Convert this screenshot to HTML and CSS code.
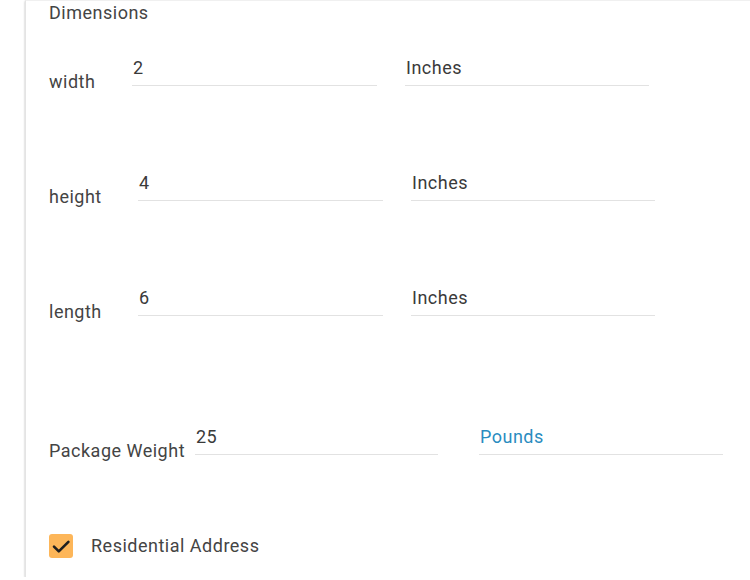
FILE: index.html
```html
<!DOCTYPE html>
<html>
<head>
<meta charset="utf-8">
<link rel="stylesheet" href="styles.css">
</head>
<body>
<div class="card">
  <div class="title">Dimensions</div>
  <div class="row row-first">
    <div class="label label-w">width</div>
    <div class="field">2</div>
    <div class="field field-unit">Inches</div>
  </div>
  <div class="row">
    <div class="label label-h">height</div>
    <div class="field">4</div>
    <div class="field field-unit">Inches</div>
  </div>
  <div class="row">
    <div class="label label-h">length</div>
    <div class="field">6</div>
    <div class="field field-unit">Inches</div>
  </div>
  <div class="row row-weight">
    <div class="label label-p">Package Weight</div>
    <div class="field field-weight">25</div>
    <div class="field field-unit field-pounds">Pounds</div>
  </div>
  <label class="check-row">
    <span class="checkbox">
      <svg width="24" height="24" viewBox="0 0 24 24"><path d="M5 12.6 L9.8 17.4 L19.4 7.9" fill="none" stroke="#1f1f1f" stroke-width="2.6" stroke-linecap="round" stroke-linejoin="round"/></svg>
    </span>
    <span class="check-label">Residential Address</span>
  </label>
</div>
</body>
</html>
```
FILE: styles.css
```css
html, body {
  margin: 0;
  padding: 0;
  background: #ffffff;
  overflow: hidden;
}
body {
  font-family: Roboto, "Liberation Sans", Arial, sans-serif;
  font-size: 18px;
  letter-spacing: 0.5px;
  color: #444;
}
.card {
  margin-left: 25px;
  width: 760px;
  height: 577px;
  box-sizing: border-box;
  padding: 0 0 0 23px;
  background: #fff;
  border-left: 1px solid #e4e4e4;
  border-top: 1px solid #f0f0f0;
  box-shadow: 0 1px 2px rgba(0,0,0,0.28);
}
.title {
  line-height: 24px;
}
.row {
  display: flex;
  align-items: flex-start;
  height: 38px;
  margin-top: 77px;
}
.row-first {
  margin-top: 31px;
}
.row-weight {
  margin-top: 101px;
}
.label {
  margin-top: 14px;
  line-height: 24px;
  white-space: nowrap;
}
.label-w { width: 83px; }
.label-h { width: 89px; }
.label-p { width: 146px; }
.field {
  width: 245px;
  line-height: 24px;
  padding: 0 0 5px 1px;
  box-sizing: border-box;
  border-bottom: 1px solid #e2e2e2;
  color: #3a3a3a;
}
.field-unit {
  width: 244px;
  margin-left: 28px;
}
.field-weight {
  width: 243px;
}
.field-pounds {
  margin-left: 41px;
  color: #2a8cc0;
}
.check-row {
  display: flex;
  align-items: center;
  margin-top: 71px;
  height: 24px;
}
.checkbox {
  width: 24px;
  height: 24px;
  border-radius: 3px;
  background: #fdb659;
  display: flex;
}
.check-label {
  margin-left: 18px;
  line-height: 24px;
}
```
